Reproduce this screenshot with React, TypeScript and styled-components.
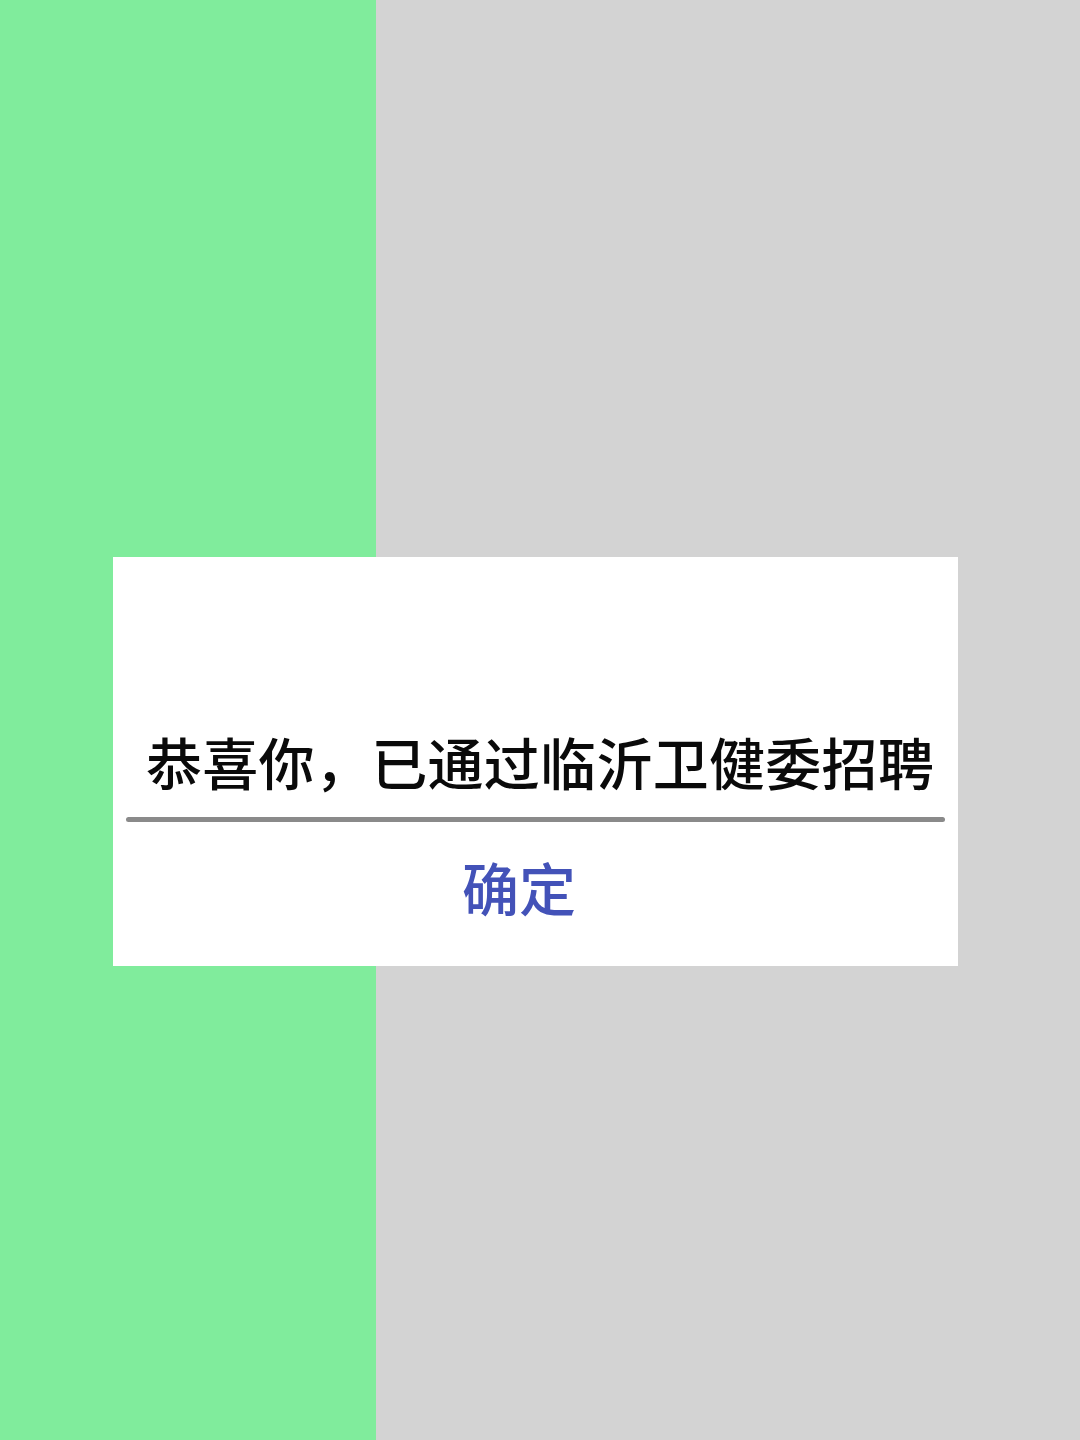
import styled, { createGlobalStyle } from "styled-components";

const GlobalStyle = createGlobalStyle`
  html, body {
    margin: 0;
    padding: 0;
  }
  body {
    font-family: "Noto Sans CJK SC", "Noto Sans", sans-serif;
  }
`;

const Page = styled.div`
  position: relative;
  display: grid;
  grid-template-columns: 376px 1fr;
  width: 1080px;
  height: 1440px;
  overflow: hidden;
`;

const Column = styled.div<{ $color: string }>`
  background-color: ${(p) => p.$color};
`;

const Dialog = styled.div`
  position: absolute;
  left: 113px;
  top: 557px;
  width: 845px;
  height: 409px;
  background-color: #ffffff;
  box-sizing: border-box;
  padding: 176px 13px 0 13px;
  display: flex;
  flex-direction: column;
`;

const Message = styled.div`
  font-size: 56px;
  line-height: 56px;
  font-weight: 500;
  color: #0a0a0a;
  padding-left: 20px;
  white-space: nowrap;
  letter-spacing: 0.3px;
`;

const Divider = styled.div`
  height: 5px;
  border-radius: 3px;
  background-color: #8a8a8a;
  margin-top: 28px;
`;

const ConfirmButton = styled.button`
  align-self: flex-start;
  margin: 36px 0 0 336px;
  padding: 0;
  border: none;
  background: none;
  font-family: "Noto Sans CJK SC", sans-serif;
  font-size: 57px;
  line-height: 57px;
  font-weight: 500;
  color: #4352b8;
  cursor: pointer;
`;

export default function App() {
  return (
    <>
      <GlobalStyle />
      <Page>
        <Column $color="#80ec9c" />
        <Column $color="#d3d3d3" />
        <Dialog>
          <Message>恭喜你，已通过临沂卫健委招聘</Message>
          <Divider />
          <ConfirmButton>确定</ConfirmButton>
        </Dialog>
      </Page>
    </>
  );
}
